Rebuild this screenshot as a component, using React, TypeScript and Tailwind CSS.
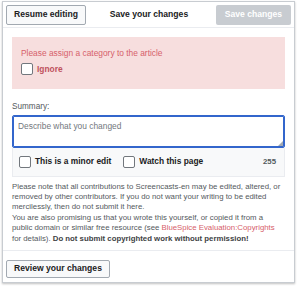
export default function App() {
  return (
    <div className="w-[300px] h-[290px] bg-white pt-[1px] pl-[2px] font-['Liberation_Sans',Arial,sans-serif]">
      <div className="w-[293px] border border-[#c8ccd1] shadow-[0_1px_2px_rgba(0,0,0,0.25)] bg-white">
        {/* Header */}
        <div className="flex items-center justify-between h-[26px] px-[3px] border-b border-[#eaecf0]">
          <button className="h-[20px] w-[80px] border border-[#a2a9b1] bg-[#f8f9fa] rounded-[2px] text-[8.6px] font-bold text-[#202122]">
            Resume editing
          </button>
          <span className="text-[8.6px] font-bold text-[#202122] mr-[4px]">Save your changes</span>
          <button className="h-[20px] w-[75px] bg-[#c8ccd1] rounded-[2px] text-[8.6px] font-bold text-white">
            Save changes
          </button>
        </div>

        {/* Body */}
        <div className="px-[9px] pt-[9px] pb-[6px]">
          <div className="bg-[#f7dede] px-[9px] pt-[11px] pb-[13px]">
            <p className="text-[8.4px] text-[#d6606a] leading-[11px]">Please assign a category to the article</p>
            <label className="flex items-center gap-[4px] mt-[4px]">
              <span className="w-[12px] h-[12px] border border-[#72777d] bg-white rounded-[2px]" />
              <span className="text-[8.4px] font-bold text-[#c0525d]">Ignore</span>
            </label>
          </div>

          <div className="mt-[13px] text-[8.2px] text-[#54595d] leading-[10px]">Summary:</div>
          <div className="relative mt-[3px] h-[33px] border border-[#36c] rounded-[2px] shadow-[inset_0_0_0_1px_#36c] px-[5px] py-[5px]">
            <span className="block text-[8.4px] leading-[10px] text-[#72777d]">Describe what you changed</span>
            <svg className="absolute right-[1px] bottom-[1px]" width="5" height="5" viewBox="0 0 5 5">
              <path d="M5 0L0 5H5Z" fill="#a2a9b1" />
            </svg>
          </div>
          <div className="flex items-center h-[29px] bg-[#f8f9fa] border border-t-0 border-[#eaecf0] px-[6px]">
            <span className="w-[12px] h-[12px] border border-[#72777d] bg-white rounded-[2px]" />
            <span className="ml-[4px] text-[8.4px] font-bold text-[#202122]">This is a minor edit</span>
            <span className="ml-[12px] w-[12px] h-[12px] border border-[#72777d] bg-white rounded-[2px]" />
            <span className="ml-[4px] text-[8.4px] font-bold text-[#202122]">Watch this page</span>
            <span className="ml-auto mr-[2px] text-[7.8px] font-bold text-[#54595d]">255</span>
          </div>

          <p className="mt-[5px] text-[7.8px] leading-[10.4px] text-[#54595d]">
            Please note that all contributions to Screencasts-en may be edited, altered, or removed by other
            contributors. If you do not want your writing to be edited mercilessly, then do not submit it here.
            <br />
            You are also promising us that you wrote this yourself, or copied it from a public domain or similar
            free resource (see <span className="text-[#d6606a]">BlueSpice Evaluation:Copyrights</span> for details).{" "}
            <b className="text-[#404244]">Do not submit copyrighted work without permission!</b>
          </p>
        </div>

        {/* Footer */}
        <div className="border-t border-[#eaecf0] px-[3px] pt-[3px] pb-[4px]">
          <button className="h-[18px] w-[104px] border border-[#a2a9b1] bg-[#f8f9fa] rounded-[2px] text-[8.6px] font-bold text-[#202122]">
            Review your changes
          </button>
        </div>
      </div>
    </div>
  );
}
